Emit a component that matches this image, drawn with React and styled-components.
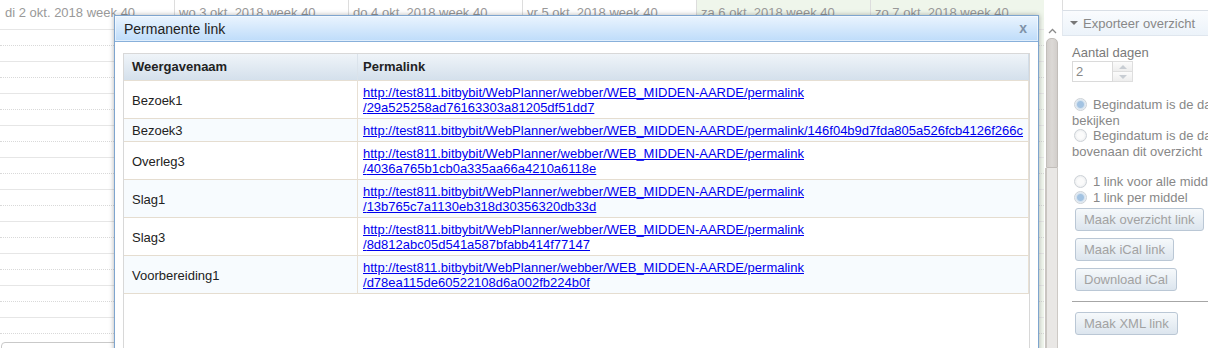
import React from 'react'
import styled, { createGlobalStyle } from 'styled-components'

const GlobalStyle = createGlobalStyle`
	html, body {
		margin: 0;
		padding: 0;
		background: #fff;
		overflow: hidden;
	}
	body {
		font-family: 'Liberation Sans', Arial, sans-serif;
		font-size: 13px;
	}
`

const BASE = 'http://test811.bitbybit/WebPlanner/webber/WEB_MIDDEN-AARDE/permalink'

const days = [
	{ label: 'di 2 okt. 2018 week 40' },
	{ label: 'wo 3 okt. 2018 week 40' },
	{ label: 'do 4 okt. 2018 week 40' },
	{ label: 'vr 5 okt. 2018 week 40' },
	{ label: 'za 6 okt. 2018 week 40', weekend: true },
	{ label: 'zo 7 okt. 2018 week 40', weekend: true },
]

const links = [
	{ name: 'Bezoek1', hash: '29a525258ad76163303a81205df51dd7' },
	{ name: 'Bezoek3', hash: '146f04b9d7fda805a526fcb4126f266c' },
	{ name: 'Overleg3', hash: '4036a765b1cb0a335aa66a4210a6118e' },
	{ name: 'Slag1', hash: '13b765c7a1130eb318d30356320db33d' },
	{ name: 'Slag3', hash: '8d812abc05d541a587bfabb414f77147' },
	{ name: 'Voorbereiding1', hash: 'd78ea115de60522108d6a002fb224b0f' },
]

const SLOTS = 20

const Page = styled.div`
	position: relative;
	display: flex;
	width: 1208px;
	height: 348px;
	overflow: hidden;
`

/* calendar */

const Calendar = styled.div`
	display: flex;
	flex-direction: column;
	width: 1060px;
	flex-shrink: 0;
`

const DayHeaders = styled.div`
	display: flex;
	height: 22px;
`

const DayHeader = styled.div`
	box-sizing: border-box;
	width: 174px;
	padding: 5px 0 0 5px;
	line-height: 15px;
	color: #999;
	white-space: nowrap;
	overflow: hidden;
	background: ${p => (p.$weekend ? '#eff6eb' : '#fff')};
	& + & {
		border-left: 1px solid #ddd;
		padding-left: 4px;
	}
`

const CalendarBody = styled.div`
	display: flex;
	flex: 1;
`

const DayColumn = styled.div`
	position: relative;
	width: 174px;
	padding-top: 9px;
	background: ${p => (p.$weekend ? '#f1f7ee' : '#fff')};
`

const Slot = styled.div`
	box-sizing: border-box;
	height: 16px;
	border-top: 1px ${p => (p.$half ? 'dotted #d9d9d9' : 'solid #e6e6e6')};
`

const Event = styled.div`
	position: absolute;
	top: 322px;
	left: 1px;
	right: 2px;
	height: 40px;
	border: 1px solid #c9c9c9;
	border-radius: 4px;
	background: #fff;
`

const Scrollbar = styled.div`
	display: flex;
	flex-direction: column;
	width: 16px;
	padding-top: 4px;
	background: #fff;
`

const ScrollArrow = styled.div`
	display: flex;
	justify-content: center;
	align-items: center;
	height: 14px;
`

const ScrollThumb = styled.div`
	height: 130px;
	margin: 0 2px 0 2px;
	box-sizing: border-box;
	border: 1px solid #c2beba;
	border-radius: 5px 5px 0 0;
	background: linear-gradient(90deg, #d2cecb, #dcd9d6 50%, #d2cecb);
`

const ScrollTrack = styled.div`
	flex: 1;
	margin: 0 2px 0 1px;
	border-left: 2px solid #c9c5c1;
	border-right: 1px solid #cdc9c5;
	background: #e9e7e5;
`

/* side panel */

const Side = styled.div`
	display: flex;
	flex-direction: column;
	width: 260px;
	flex-shrink: 0;
	margin-left: 2px;
`

const SideTop = styled.div`
	height: 10px;
	border-left: 1px solid #ddd;
`

const SectionHeader = styled.div`
	display: flex;
	align-items: center;
	gap: 5px;
	height: 24px;
	padding-left: 7px;
	border-top: 1px solid #d9dfe6;
	border-bottom: 1px solid #dfe6ee;
	border-left: 1px solid #e3e8ee;
	background: linear-gradient(#fafcfe, #ecf3fa);
	color: #888;
	white-space: nowrap;
`

const Caret = styled.span`
	width: 0;
	height: 0;
	border-left: 4px solid transparent;
	border-right: 4px solid transparent;
	border-top: 4px solid #777;
`

const SectionBody = styled.div`
	display: flex;
	flex-direction: column;
	align-items: flex-start;
	padding: 9px 10px 0 10px;
	color: #888;
`

const FieldLabel = styled.div`
	line-height: 16px;
	color: #7a7a7a;
`

const Spinner = styled.div`
	display: flex;
	height: 21px;
`

const SpinInput = styled.div`
	box-sizing: border-box;
	width: 41px;
	padding-left: 3px;
	border: 1px solid #dadada;
	line-height: 19px;
	color: #888;
`

const SpinButtons = styled.div`
	display: flex;
	flex-direction: column;
	width: 20px;
`

const SpinButton = styled.div`
	flex: 1;
	display: flex;
	align-items: center;
	justify-content: center;
	border: 1px solid #dedede;
	border-left: none;
	& + & {
		border-top: none;
	}
	background: linear-gradient(#fbfbfb, #eeeeee);
	&::after {
		content: '';
		border-left: 4px solid transparent;
		border-right: 4px solid transparent;
		${p => (p.$down ? 'border-top' : 'border-bottom')}: 4px solid #c8cdd3;
	}
`

const RadioGroup = styled.div`
	margin-top: ${p => p.$gap}px;
	line-height: 15.5px;
	white-space: nowrap;
`

const RadioOption = styled.div`
	color: #888;
`

const Radio = styled.span`
	display: inline-block;
	box-sizing: border-box;
	width: 13px;
	height: 13px;
	margin: 0 6px 0 2px;
	vertical-align: -2px;
	border: 1px solid #cdd2d7;
	border-radius: 50%;
	background: ${p =>
		p.$checked
			? 'radial-gradient(circle, #a3c3e2 0 3px, #d3e1ee 4px, #f3f6f9 6px)'
			: 'radial-gradient(circle, #fbfbfb 0 3px, #eceef0 6px)'};
`

const Button = styled.div`
	box-sizing: border-box;
	height: 23px;
	margin: ${p => p.$top || 0}px 0 7px 3px;
	padding: 0 8px;
	border: 1px solid #bac7d5;
	border-radius: 3px;
	background: linear-gradient(#f6f9fb, #dce5ee);
	color: #a2a2a2;
	line-height: 21px;
	white-space: nowrap;
`

const Rule = styled.div`
	align-self: stretch;
	height: 1px;
	margin: 3px -10px 10px 0;
	background: #a6a6a6;
`

/* dialog */

const Dialog = styled.div`
	position: absolute;
	top: 15px;
	left: 114px;
	width: 925px;
	height: 380px;
	box-sizing: border-box;
	display: flex;
	flex-direction: column;
	border: 1px solid #7ea5cf;
	background: #fff;
	box-shadow: 0 0 5px rgba(0, 0, 0, 0.3);
`

const TitleBar = styled.div`
	display: flex;
	align-items: center;
	justify-content: space-between;
	height: 25px;
	padding: 0 11px 0 9px;
	border-bottom: 1px solid #88b0da;
	background: linear-gradient(#eaf4fe, #bedcfa);
	box-shadow: inset 0 0 0 1px rgba(255, 255, 255, 0.5);
`

const Title = styled.span`
	font-size: 14px;
	color: #222;
`

const Close = styled.span`
	font-size: 14px;
	font-weight: bold;
	color: #7f92a8;
	line-height: 14px;
	margin-top: -2px;
`

const DialogContent = styled.div`
	flex: 1;
	display: flex;
	padding: 11px 8px 0 8px;
`

const TableBox = styled.div`
	flex: 1;
	border: 1px solid #d8d8d8;
	border-bottom: none;
`

const Table = styled.table`
	width: 100%;
	table-layout: fixed;
	border-spacing: 0;
	color: #222;
	font-size: 13px;
`

const NameCol = styled.col`
	width: 234px;
`

const Th = styled.th`
	padding: 5px 5px 6px ${p => (p.$first ? 8 : 5)}px;
	line-height: 15px;
	text-align: left;
	font-weight: bold;
	background: linear-gradient(#eff4f9, #d4e0ec);
	border-bottom: 1px solid #e6dfd3;
	border-right: 1px solid ${p => (p.$first ? '#dbe3eb' : '#d2dde8')};
`

const Row = styled.tr`
	background: ${p => (p.$alt ? '#f7fbfe' : '#fff')};
`

const Td = styled.td`
	padding: 4px 3px 3px ${p => (p.$first ? 8 : 5)}px;
	line-height: 15px;
	vertical-align: middle;
	border-bottom: 1px solid #e5ddd0;
	border-right: 1px solid #e8e0d4;
`

const Link = styled.a`
	color: #0000ee;
	text-decoration: underline;
`

const Chunk = styled.span`
	white-space: nowrap;
`

const ChevronUp = () => (
	<svg width="9" height="6" viewBox="0 0 9 6">
		<path d="M1 5 L4.5 1.5 L8 5" fill="none" stroke="#8a8a8a" strokeWidth="1.3" />
	</svg>
)

const App = () => (
	<>
		<GlobalStyle />
		<Page>
			<Calendar>
				<DayHeaders>
					{days.map(d => (
						<DayHeader key={d.label} $weekend={d.weekend}>{d.label}</DayHeader>
					))}
					<Scrollbar as="div" style={{ paddingTop: 0 }} />
				</DayHeaders>
				<CalendarBody>
					{days.map((d, i) => (
						<DayColumn key={d.label} $weekend={d.weekend}>
							{Array.from({ length: SLOTS }, (_, s) => (
								<Slot key={s} $half={s % 2 === 1} />
							))}
							{i === 0 && <Event />}
						</DayColumn>
					))}
					<Scrollbar>
						<ScrollArrow><ChevronUp /></ScrollArrow>
						<ScrollThumb />
						<ScrollTrack />
					</Scrollbar>
				</CalendarBody>
			</Calendar>

			<Side>
				<SideTop />
				<SectionHeader>
					<Caret />
					Exporteer overzicht
				</SectionHeader>
				<SectionBody>
					<FieldLabel>Aantal dagen</FieldLabel>
					<Spinner>
						<SpinInput>2</SpinInput>
						<SpinButtons>
							<SpinButton />
							<SpinButton $down />
						</SpinButtons>
					</Spinner>
					<RadioGroup $gap={15}>
						<RadioOption>
							<Radio $checked />Begindatum is de dag die u nu aan het<br />bekijken
						</RadioOption>
						<RadioOption>
							<Radio />Begindatum is de datum die staat<br />bovenaan dit overzicht
						</RadioOption>
					</RadioGroup>
					<RadioGroup $gap={15}>
						<RadioOption>
							<Radio />1 link voor alle middelen
						</RadioOption>
						<RadioOption>
							<Radio $checked />1 link per middel
						</RadioOption>
					</RadioGroup>
					<Button $top={3}>Maak overzicht link</Button>
					<Button>Maak iCal link</Button>
					<Button>Download iCal</Button>
					<Rule />
					<Button>Maak XML link</Button>
				</SectionBody>
			</Side>

			<Dialog>
				<TitleBar>
					<Title>Permanente link</Title>
					<Close>x</Close>
				</TitleBar>
				<DialogContent>
					<TableBox>
						<Table>
							<colgroup>
								<NameCol />
								<col />
							</colgroup>
							<thead>
								<tr>
									<Th $first>Weergavenaam</Th>
									<Th>Permalink</Th>
								</tr>
							</thead>
							<tbody>
								{links.map((l, i) => (
									<Row key={l.name} $alt={i % 2 === 1}>
										<Td $first>{l.name}</Td>
										<Td>
											<Link href={`${BASE}/${l.hash}`}>
												<Chunk>{BASE}</Chunk>
												<wbr />
												<Chunk>/{l.hash}</Chunk>
											</Link>
										</Td>
									</Row>
								))}
							</tbody>
						</Table>
					</TableBox>
				</DialogContent>
			</Dialog>
		</Page>
	</>
)

export default App
